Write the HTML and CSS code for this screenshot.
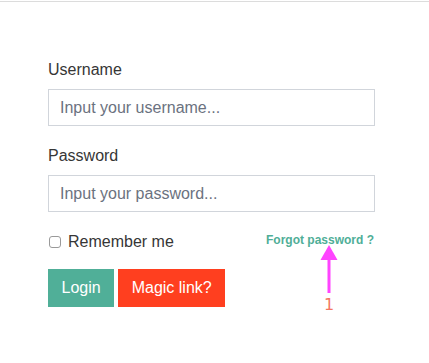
FILE: index.html
```html
<!DOCTYPE html>
<html lang="en">
<head>
<meta charset="utf-8">
<title>Login</title>
<link rel="stylesheet" href="styles.css">
</head>
<body>
<div class="topbar"></div>
<main class="page">
  <form class="login-form">
    <div class="field">
      <label class="label" for="username">Username</label>
      <input class="input" id="username" type="text" placeholder="Input your username...">
    </div>
    <div class="field">
      <label class="label" for="password">Password</label>
      <input class="input" id="password" type="password" placeholder="Input your password...">
    </div>
    <div class="options">
      <label class="remember"><input class="check" type="checkbox"><span>Remember me</span></label>
      <a class="forgot" href="#">Forgot password ?</a>
      <div class="annotation">
        <svg class="arrow" width="18" height="49" viewBox="0 0 18 49">
          <polygon points="9,0 17.5,15 0.5,15" fill="#ff44ff"/>
          <rect x="7.5" y="14" width="3" height="34" fill="#ff44ff"/>
        </svg>
        <span class="anno-num">1</span>
      </div>
    </div>
    <div class="actions">
      <button class="btn btn-login" type="button">Login</button>
      <button class="btn btn-magic" type="button">Magic link?</button>
    </div>
  </form>
</main>
</body>
</html>
```

FILE: styles.css
```css
* { box-sizing: border-box; }

html, body {
  margin: 0;
  padding: 0;
  background: #ffffff;
}

body {
  min-height: 363px;
  font-family: "Liberation Sans", Arial, Helvetica, sans-serif;
  font-size: 16px;
  line-height: 24px;
  color: #363636;
}

.topbar {
  height: 2px;
  border-top: 1px solid #ffffff;
  border-bottom: 1px solid #dcdcdc;
}

.page {
  padding: 56px 0 56px 48px;
}

.login-form {
  width: 327px;
  display: flex;
  flex-direction: column;
}

.field {
  display: flex;
  flex-direction: column;
  gap: 7px;
  margin-bottom: 18px;
}

.label {
  display: block;
  height: 24px;
  color: #363636;
}

.input {
  display: block;
  width: 100%;
  height: 37px;
  margin: 0;
  padding: 0 11px;
  border: 1px solid #d1d5db;
  border-radius: 0;
  font-family: inherit;
  font-size: 16px;
  color: #363636;
  background: #fff;
  outline: none;
}

.input::placeholder {
  color: #6b7280;
  opacity: 1;
}

.options {
  position: relative;
  display: flex;
  justify-content: space-between;
  align-items: flex-start;
  height: 24px;
  margin-bottom: 15px;
}

.remember {
  display: flex;
  align-items: center;
  height: 24px;
  color: #363636;
}

.check {
  appearance: none;
  -webkit-appearance: none;
  width: 12px;
  height: 12px;
  margin: 0 7px 0 1px;
  border: 1px solid #9a9a9a;
  border-radius: 3px;
  background: #ffffff;
}

.forgot {
  margin-top: 1px;
  margin-right: 1px;
  font-size: 12px;
  line-height: 18px;
  font-weight: 700;
  color: #4fae97;
  text-decoration: none;
}

.annotation {
  position: absolute;
  left: 272px;
  top: 15px;
  width: 18px;
  display: flex;
  flex-direction: column;
  align-items: center;
  z-index: 2;
}

.arrow {
  display: block;
  flex: none;
}

.anno-num {
  display: block;
  margin-top: 2px;
  font-family: "DejaVu Sans", sans-serif;
  font-size: 16px;
  line-height: 18px;
  color: #f4765f;
}

.actions {
  display: flex;
  gap: 4px;
}

.btn {
  height: 38px;
  padding: 0 13.5px;
  border: 0;
  border-radius: 0;
  font-family: inherit;
  font-size: 16px;
  color: #ffffff;
  cursor: pointer;
}

.btn-login {
  background: #50af98;
}

.btn-magic {
  background: #ff3f1f;
}
```
